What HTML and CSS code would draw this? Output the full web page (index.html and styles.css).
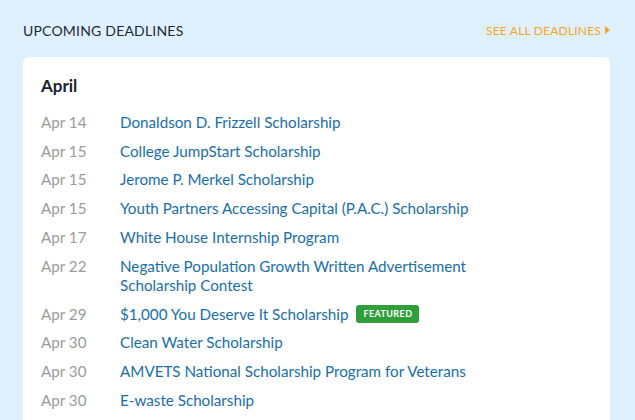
FILE: index.html
```html
<!DOCTYPE html>
<html lang="en">
<head>
    <meta charset="UTF-8">
    <title>Upcoming Deadlines</title>
    <link rel="stylesheet" href="styles.css">
</head>
<body>
    <div class="deadlines">
        <div class="deadlines-head">
            <h2>Upcoming Deadlines</h2>
            <a class="see-all" href="#">See all deadlines <span class="arrow"></span></a>
        </div>
        <div class="card">
            <h3>April</h3>
            <ul class="list">
                <li><span class="date">Apr 14</span><a href="#">Donaldson D. Frizzell Scholarship</a></li>
                <li><span class="date">Apr 15</span><a href="#">College JumpStart Scholarship</a></li>
                <li><span class="date">Apr 15</span><a href="#">Jerome P. Merkel Scholarship</a></li>
                <li><span class="date">Apr 15</span><a href="#">Youth Partners Accessing Capital (P.A.C.) Scholarship</a></li>
                <li><span class="date">Apr 17</span><a href="#">White House Internship Program</a></li>
                <li><span class="date">Apr 22</span><a href="#">Negative Population Growth Written Advertisement Scholarship Contest</a></li>
                <li><span class="date">Apr 29</span><a href="#">$1,000 You Deserve It Scholarship</a><span class="badge">Featured</span></li>
                <li><span class="date">Apr 30</span><a href="#">Clean Water Scholarship</a></li>
                <li><span class="date">Apr 30</span><a href="#">AMVETS National Scholarship Program for Veterans</a></li>
                <li><span class="date">Apr 30</span><a href="#">E-waste Scholarship</a></li>
            </ul>
        </div>
    </div>
</body>
</html>
```

FILE: styles.css
```css
body {
    margin: 0;
    background-color: #dff0fd;
    font-family: Lato, "Open Sans", sans-serif;
}
.deadlines {
    padding: 20px 25px 0 23px;
}
.deadlines-head {
    display: flex;
    justify-content: space-between;
    align-items: center;
    height: 20px;
    margin-bottom: 17px;
}
.deadlines-head h2 {
    margin: 0;
    font-size: 14px;
    font-weight: 400;
    text-transform: uppercase;
    color: #1c2a3a;
    letter-spacing: 0.2px;
}
.see-all {
    color: #f5a623;
    font-size: 12px;
    letter-spacing: 0.2px;
    text-decoration: none;
    text-transform: uppercase;
    display: flex;
    align-items: center;
    gap: 4px;
}
.arrow {
    width: 0;
    height: 0;
    border-top: 4px solid transparent;
    border-bottom: 4px solid transparent;
    border-left: 5px solid #f5a623;
}
.card {
    background: #fff;
    border-radius: 6px;
    padding: 18px 18px 20px 18px;
}
.card h3 {
    margin: 0 0 12px;
    font-size: 17px;
    font-weight: 700;
    color: #1c2230;
}
.list {
    list-style: none;
    margin: 0;
    padding: 0;
}
.list li {
    display: flex;
    align-items: flex-start;
    padding: 4.9px 0;
    font-size: 15.2px;
    line-height: 19px;
}
.date {
    width: 79px;
    flex-shrink: 0;
    color: #9b9b9b;
}
.list a {
    color: #1a6ea6;
    text-decoration: none;
    max-width: 370px;
}
.badge {
    background: #2f9e3b;
    color: #fff;
    font-size: 9px;
    font-weight: 700;
    text-transform: uppercase;
    letter-spacing: 0.4px;
    border-radius: 3px;
    padding: 0 7px;
    line-height: 18px;
    margin-left: 8px;
}
```
